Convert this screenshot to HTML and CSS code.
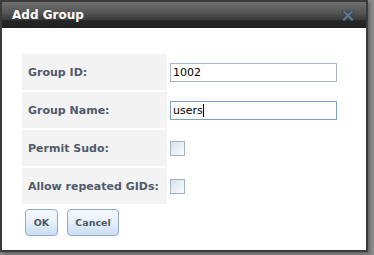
FILE: index.html
```html
<!DOCTYPE html>
<html>
<head>
<meta charset="utf-8">
<link rel="stylesheet" href="styles.css">
</head>
<body>
<div class="dialog">
  <div class="titlebar">
    <span class="title">Add Group</span>
    <svg class="close" width="12" height="11" viewBox="0 0 12 11">
      <path d="M2 1.5 L10 9.5 M10 1.5 L2 9.5" stroke="#303c46" stroke-width="3.8" stroke-linecap="square"/>
      <path d="M2 1.5 L10 9.5 M10 1.5 L2 9.5" stroke="#5f7891" stroke-width="2.2" stroke-linecap="square"/>
    </svg>
  </div>
  <div class="content">
    <table class="form">
      <tr>
        <td class="label">Group ID:</td>
        <td class="field"><input class="text" type="text" value="1002"></td>
      </tr>
      <tr>
        <td class="label">Group Name:</td>
        <td class="field">
          <div class="focus-wrap">
            <input class="text focused" type="text" value="users">
            <span class="caret"></span>
          </div>
        </td>
      </tr>
      <tr>
        <td class="label">Permit Sudo:</td>
        <td class="field"><input class="check" type="checkbox"></td>
      </tr>
      <tr>
        <td class="label">Allow repeated GIDs:</td>
        <td class="field"><input class="check" type="checkbox"></td>
      </tr>
    </table>
    <div class="buttons">
      <button class="btn ok">OK</button>
      <button class="btn cancel">Cancel</button>
    </div>
  </div>
</div>
</body>
</html>
```

FILE: styles.css
```css
html, body {
  margin: 0;
  padding: 0;
}
body {
  background: #8e8e8e;
  width: 374px;
  height: 255px;
  overflow: hidden;
}
.dialog {
  box-sizing: border-box;
  width: 368px;
  height: 252px;
  border: 2px solid #3b3b3b;
  background: #ffffff;
  box-shadow: 2px 2px 4px #5e5e5e;
  font-family: "DejaVu Sans", Verdana, sans-serif;
}
.titlebar {
  height: 26px;
  display: flex;
  align-items: center;
  padding: 0 12px 0 10px;
  background: linear-gradient(#707070 0%, #565656 40%, #3a3a3a 68%, #262626 72%, #202020 100%);
}
.title {
  color: #ffffff;
  font-weight: bold;
  font-size: 12px;
}
.close {
  margin-left: auto;
  display: block;
}
.content {
  padding: 24px 0 0 18px;
}
.form {
  border-collapse: separate;
  border-spacing: 2px;
}
.form td {
  height: 36px;
  padding: 0;
}
.label {
  box-sizing: border-box;
  width: 145px;
  padding: 0 6px !important;
  background: #f3f3f3;
  color: #515a6c;
  font-weight: bold;
  font-size: 11px;
  white-space: nowrap;
}
.field {
  padding-left: 1px !important;
}
.focus-wrap {
  position: relative;
  width: 167px;
}
.caret {
  position: absolute;
  left: 33px;
  top: 3px;
  width: 1px;
  height: 13px;
  background: #000000;
}
.text {
  box-sizing: border-box;
  display: block;
  width: 167px;
  height: 19px;
  margin: 0;
  padding: 0 2px;
  border: 1px solid #aab4c6;
  font-family: "DejaVu Sans", Verdana, sans-serif;
  font-size: 11px;
  color: #000000;
  outline: none;
  background: #ffffff;
}
.text.focused {
  border-color: #7ba0c6;
}
.check {
  appearance: none;
  -webkit-appearance: none;
  display: block;
  box-sizing: border-box;
  width: 15px;
  height: 15px;
  margin: 0;
  border: 1px solid #a3b1c4;
  background: linear-gradient(135deg, #d3e0ec 0%, #e9f0f6 50%, #fafcfd 100%);
}
.buttons {
  display: flex;
  gap: 9px;
  padding: 3px 0 0 5px;
}
.btn {
  box-sizing: border-box;
  height: 27px;
  margin: 0;
  padding: 0;
  border: 1px solid #8eaacb;
  border-radius: 4px;
  background: linear-gradient(#f6f9fd 0%, #e6eff9 50%, #c8ddf3 100%);
  color: #505560;
  font-family: "DejaVu Sans", Verdana, sans-serif;
  font-weight: bold;
  font-size: 9.5px;
}
.ok {
  width: 33px;
}
.cancel {
  width: 52px;
}
```
